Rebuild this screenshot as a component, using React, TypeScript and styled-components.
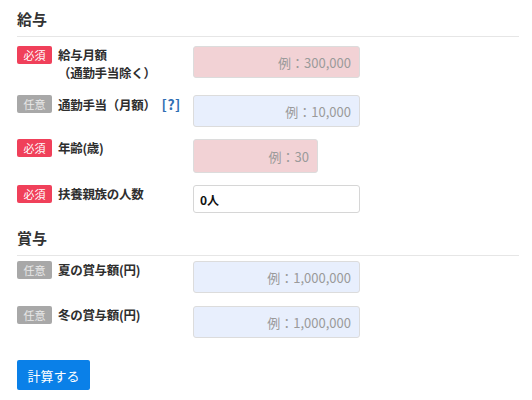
import React from "react";
import styled, { createGlobalStyle } from "styled-components";

const GlobalStyle = createGlobalStyle`
  body {
    margin: 0;
    background: #ffffff;
    font-family: "Noto Sans CJK JP", "Noto Sans", sans-serif;
    color: #333333;
  }
`;

const Page = styled.div`
  width: 502px;
  padding: 8px 11px 0 17px;
`;

const Heading = styled.h2<{ $top: number; $bottom: number }>`
  margin: ${(p) => p.$top}px 0 ${(p) => p.$bottom}px;
  padding-bottom: 6px;
  border-bottom: 1px solid #e6e6e6;
  font-size: 15px;
  line-height: 22px;
  font-weight: 700;
  color: #333333;
`;

const Row = styled.div<{ $gap: number }>`
  display: grid;
  grid-template-columns: 176px 1fr;
  align-items: start;
  margin-bottom: ${(p) => p.$gap}px;
`;

const LabelCell = styled.div`
  display: flex;
  align-items: flex-start;
  gap: 6px;
`;

const Badge = styled.span<{ $required: boolean }>`
  flex: none;
  width: 35px;
  height: 18px;
  border-radius: 2px;
  background: ${(p) => (p.$required ? "#f0405a" : "#a8a8a8")};
  color: ${(p) => (p.$required ? "#ffffff" : "#e8e8e8")};
  font-size: 11px;
  line-height: 18px;
  text-align: center;
`;

const LabelText = styled.div`
  font-size: 12.5px;
  font-weight: 700;
  line-height: 18px;
  letter-spacing: -0.3px;
  color: #2e2e2e;
`;

const SubLine = styled.div`
  margin-top: 0px;
`;

const Help = styled.span`
  color: #2f6fb3;
  margin-left: 6px;
  font-size: 14px;
  font-weight: 700;
  letter-spacing: 0.5px;
`;

const Field = styled.input<{ $tone: "pink" | "blue" | "plain"; $w: number; $h: number }>`
  box-sizing: border-box;
  width: ${(p) => p.$w}px;
  height: ${(p) => p.$h}px;
  border: 1px solid ${(p) => (p.$tone === "plain" ? "#d6d6d6" : "#dcdcdc")};
  border-radius: 3px;
  background: ${(p) =>
    p.$tone === "pink" ? "#f2d2d5" : p.$tone === "blue" ? "#e8effd" : "#ffffff"};
  padding: 0 8px 0 6px;
  font-family: "Noto Sans CJK JP", "Noto Sans", sans-serif;
  font-size: 12px;
  text-align: ${(p) => (p.$tone === "plain" ? "left" : "right")};
  font-weight: ${(p) => (p.$tone === "plain" ? 700 : 400)};
  color: #111111;
  outline: none;
  &::placeholder {
    color: #9a9a9a;
    font-size: 13px;
  }
`;

const SubmitButton = styled.button`
  margin-top: 22px;
  width: 73px;
  height: 30px;
  border: none;
  border-radius: 2px;
  background: #0a80e8;
  color: #ffffff;
  font-family: "Noto Sans CJK JP", "Noto Sans", sans-serif;
  font-size: 13px;
  cursor: pointer;
`;

type FieldSpec = {
  required: boolean;
  label: React.ReactNode;
  tone: "pink" | "blue" | "plain";
  w: number;
  h: number;
  placeholder?: string;
  value?: string;
  gap: number;
};

const salary: FieldSpec[] = [
  {
    required: true,
    label: (
      <>
        給与月額
        <SubLine>（通勤手当除く）</SubLine>
      </>
    ),
    tone: "pink",
    w: 167,
    h: 32,
    placeholder: "例：300,000",
    gap: 13,
  },
  {
    required: false,
    label: (
      <>
        通勤手当（月額）<Help>[?]</Help>
      </>
    ),
    tone: "blue",
    w: 167,
    h: 32,
    placeholder: "例：10,000",
    gap: 12,
  },
  {
    required: true,
    label: "年齢(歳)",
    tone: "pink",
    w: 125,
    h: 34,
    placeholder: "例：30",
    gap: 12,
  },
  {
    required: true,
    label: "扶養親族の人数",
    tone: "plain",
    w: 167,
    h: 28,
    value: "0人",
    gap: 0,
  },
];

const bonus: FieldSpec[] = [
  {
    required: false,
    label: "夏の賞与額(円)",
    tone: "blue",
    w: 167,
    h: 32,
    placeholder: "例：1,000,000",
    gap: 13,
  },
  {
    required: false,
    label: "冬の賞与額(円)",
    tone: "blue",
    w: 167,
    h: 32,
    placeholder: "例：1,000,000",
    gap: 0,
  },
];

const FormRow = ({ spec }: { spec: FieldSpec }) => (
  <Row $gap={spec.gap}>
    <LabelCell>
      <Badge $required={spec.required}>{spec.required ? "必須" : "任意"}</Badge>
      <LabelText>{spec.label}</LabelText>
    </LabelCell>
    <Field
      $tone={spec.tone}
      $w={spec.w}
      $h={spec.h}
      placeholder={spec.placeholder}
      defaultValue={spec.value}
    />
  </Row>
);

const App = (): React.ReactElement => (
  <>
    <GlobalStyle />
    <Page>
      <Heading $top={0} $bottom={9}>給与</Heading>
      {salary.map((s, i) => (
        <FormRow key={i} spec={s} />
      ))}
      <Heading $top={14} $bottom={5}>賞与</Heading>
      {bonus.map((s, i) => (
        <FormRow key={i} spec={s} />
      ))}
      <SubmitButton>計算する</SubmitButton>
    </Page>
  </>
);

export default App;
